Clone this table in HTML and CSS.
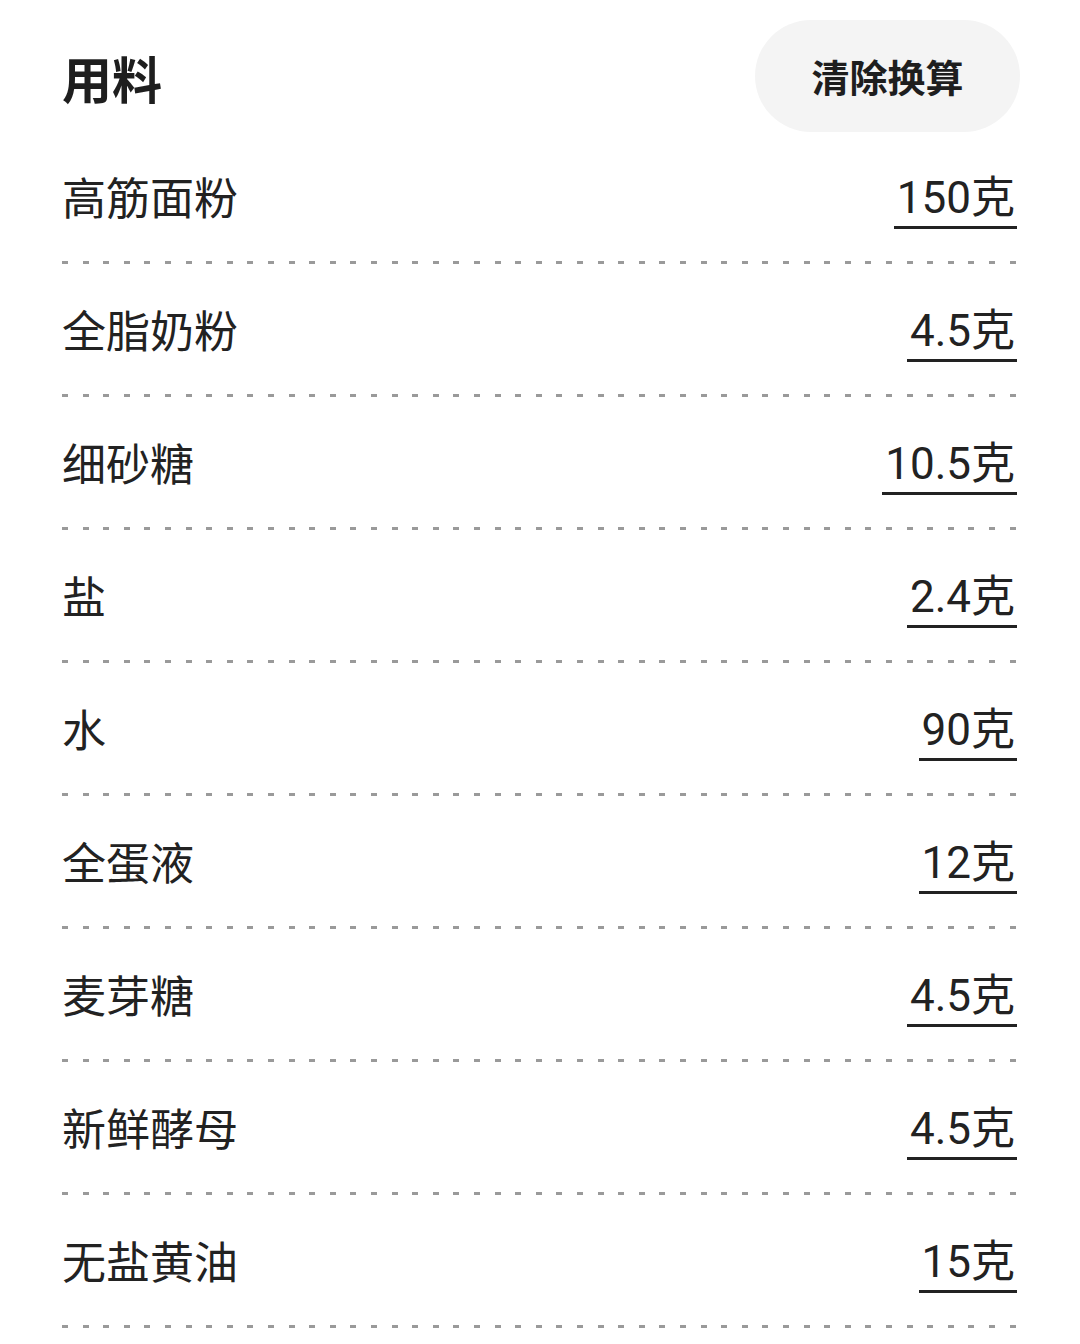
FILE: index.html
```html
<!DOCTYPE html>
<html lang="zh-CN">
<head>
<meta charset="utf-8">
<title>用料</title>
<link rel="stylesheet" href="styles.css">
</head>
<body>
<div class="page">
  <div class="header">
    <h1 class="title">用料</h1>
    <button class="clear-btn">清除换算</button>
  </div>
  <ul class="list">
    <li class="row"><span class="name">高筋面粉</span><span class="amount">150克</span></li>
    <li class="row"><span class="name">全脂奶粉</span><span class="amount">4.5克</span></li>
    <li class="row"><span class="name">细砂糖</span><span class="amount">10.5克</span></li>
    <li class="row"><span class="name">盐</span><span class="amount">2.4克</span></li>
    <li class="row"><span class="name">水</span><span class="amount">90克</span></li>
    <li class="row"><span class="name">全蛋液</span><span class="amount">12克</span></li>
    <li class="row"><span class="name">麦芽糖</span><span class="amount">4.5克</span></li>
    <li class="row"><span class="name">新鲜酵母</span><span class="amount">4.5克</span></li>
    <li class="row"><span class="name">无盐黄油</span><span class="amount">15克</span></li>
  </ul>
</div>
</body>
</html>
```

FILE: styles.css
```css
* { box-sizing: border-box; }
html, body {
  margin: 0;
  padding: 0;
  background: #ffffff;
}
body {
  font-family: "Noto Sans CJK SC", "Noto Sans", sans-serif;
  color: #222222;
}
.page {
  width: 1080px;
  padding: 0 63px 0 62px;
}
.header {
  display: flex;
  align-items: center;
  justify-content: space-between;
  padding-top: 20px;
  height: 131px;
}
.title {
  margin: 0;
  font-size: 50px;
  font-weight: 700;
  line-height: 1;
  color: #1e1e1e;
  padding-top: 2px;
}
.clear-btn {
  width: 265px;
  height: 112px;
  margin-right: -3px;
  border: none;
  border-radius: 56px;
  background: #f4f4f4;
  font-family: "Noto Sans CJK SC", sans-serif;
  font-size: 38px;
  font-weight: 700;
  color: #1e1e1e;
  padding: 0;
  line-height: 1;
}
.list {
  list-style: none;
  margin: 0;
  padding: 0;
}
.row {
  position: relative;
  display: flex;
  align-items: center;
  justify-content: space-between;
  height: 133px;
  padding-bottom: 3px;
  background-image: repeating-linear-gradient(to right, #9a9a9a 0 6px, transparent 6px 20.6px);
  background-size: 100% 3px;
  background-position: left bottom;
  background-repeat: no-repeat;
}
.name {
  font-size: 44px;
  line-height: 1;
  color: #222222;
}
.amount {
  font-family: "Roboto", "Noto Sans CJK SC", sans-serif;
  font-size: 44px;
  line-height: 1;
  color: #222222;
  padding: 0 2px 6px 3px;
  border-bottom: 3px solid #222222;
  margin-top: 12px;
}
```
